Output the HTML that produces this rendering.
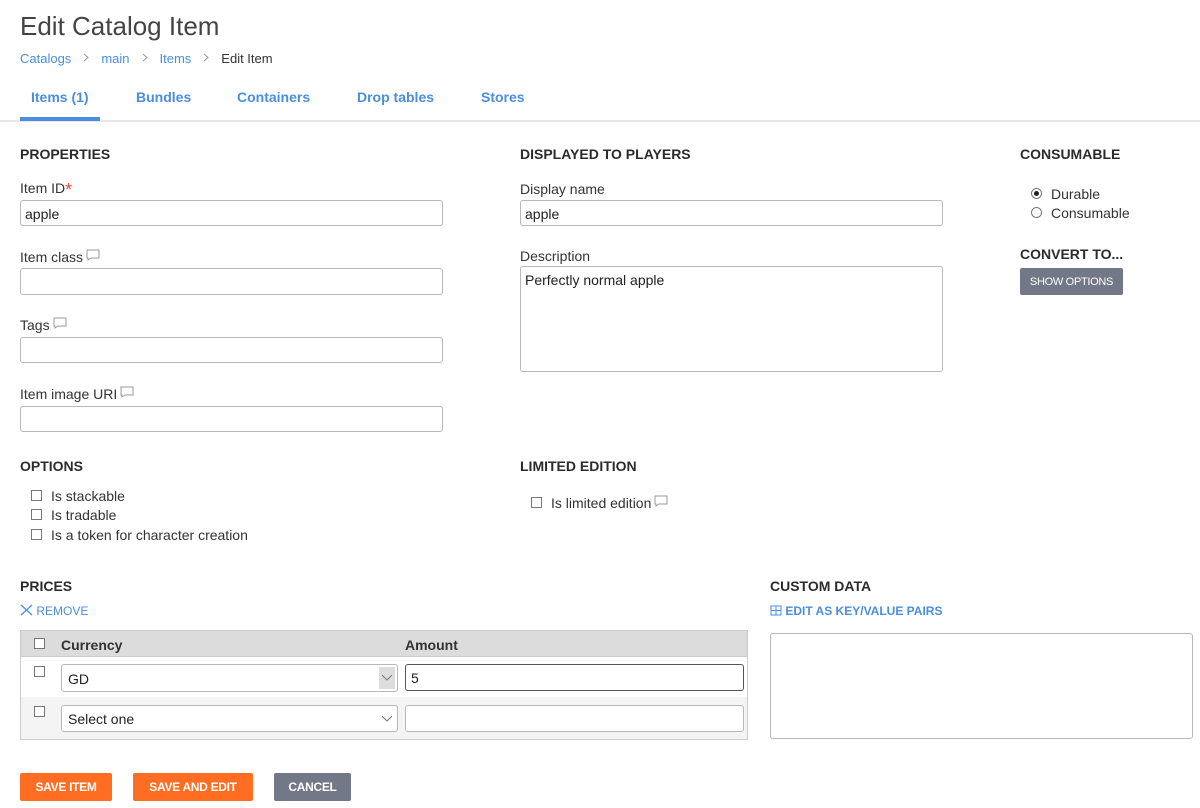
<!DOCTYPE html>
<html><head><meta charset="utf-8"><style>
*{box-sizing:border-box;margin:0;padding:0}
body{width:1200px;height:808px;background:#fff;font-family:"Liberation Sans",sans-serif;color:#333;position:relative;overflow:hidden;font-size:14px}
.a{position:absolute;white-space:nowrap}
.h{font-weight:bold;font-size:14px;color:#2b2b2b}
.lbl{font-size:14px;color:#333}
.in{position:absolute;border:1px solid #b8b8b8;border-radius:3px;background:#fff;font-size:14px;padding:5px 4px 3px;color:#222}
.cb{position:absolute;width:11px;height:11px;border:1px solid #777;background:#fff}
.blue{color:#4a8ee0}
.btn{position:absolute;color:#fff;font-size:12px;font-weight:bold;text-align:center;line-height:29px;border-radius:2px;letter-spacing:-0.3px}
svg.c{vertical-align:1px;margin-left:3px}
.sep{display:inline-block;margin:0 12px;vertical-align:1px}
</style></head><body>
<div class="a" style="left:20px;top:11px;font-size:26px;color:#444">Edit Catalog Item</div>
<div class="a" style="left:20px;top:51px;font-size:13px"><span class="blue">Catalogs</span><svg class="sep" width="6" height="9"><path d="M1 1l4 3.5L1 8" fill="none" stroke="#999"/></svg><span class="blue">main</span><svg class="sep" width="6" height="9"><path d="M1 1l4 3.5L1 8" fill="none" stroke="#999"/></svg><span class="blue">Items</span><svg class="sep" width="6" height="9"><path d="M1 1l4 3.5L1 8" fill="none" stroke="#999"/></svg><span style="color:#333">Edit Item</span></div>
<div class="a blue" style="left:31px;top:89px;font-weight:bold;font-size:14px">Items (1)</div>
<div class="a blue" style="left:136px;top:89px;font-weight:bold">Bundles</div>
<div class="a blue" style="left:237px;top:89px;font-weight:bold">Containers</div>
<div class="a blue" style="left:357px;top:89px;font-weight:bold">Drop tables</div>
<div class="a blue" style="left:481px;top:89px;font-weight:bold">Stores</div>
<div class="a" style="left:0;top:120px;width:1200px;height:2px;background:#e6e6e6"></div>
<div class="a" style="left:20px;top:117px;width:80px;height:4px;background:#4a8ee0"></div>

<div class="a h" style="left:20px;top:146px">PROPERTIES</div>
<div class="a lbl" style="left:20px;top:180px">Item ID<span style="color:#e8473c;font-size:18px;vertical-align:-3px">*</span></div>
<div class="in" style="left:20px;top:200px;width:423px;height:26px">apple</div>
<div class="a lbl" style="left:20px;top:249px">Item class<svg class="c" width="14" height="12"><path d="M1 1h12v8H5l-3 2V9H1z" fill="none" stroke="#999"/></svg></div>
<div class="in" style="left:20px;top:268px;width:423px;height:27px"></div>
<div class="a lbl" style="left:20px;top:317px">Tags<svg class="c" width="14" height="12"><path d="M1 1h12v8H5l-3 2V9H1z" fill="none" stroke="#999"/></svg></div>
<div class="in" style="left:20px;top:337px;width:423px;height:26px"></div>
<div class="a lbl" style="left:20px;top:386px">Item image URI<svg class="c" width="14" height="12"><path d="M1 1h12v8H5l-3 2V9H1z" fill="none" stroke="#999"/></svg></div>
<div class="in" style="left:20px;top:406px;width:423px;height:26px"></div>

<div class="a h" style="left:520px;top:146px">DISPLAYED TO PLAYERS</div>
<div class="a lbl" style="left:520px;top:181px">Display name</div>
<div class="in" style="left:520px;top:200px;width:423px;height:26px">apple</div>
<div class="a lbl" style="left:520px;top:248px">Description</div>
<div class="in" style="left:520px;top:266px;width:423px;height:106px">Perfectly normal apple</div>

<div class="a h" style="left:1020px;top:146px">CONSUMABLE</div>
<div class="a" style="left:1031px;top:188px;width:11px;height:11px;border:1px solid #777;border-radius:50%"><div style="margin:2px;width:5px;height:5px;border-radius:50%;background:#222"></div></div>
<div class="a lbl" style="left:1051px;top:186px">Durable</div>
<div class="a" style="left:1031px;top:207px;width:11px;height:11px;border:1px solid #777;border-radius:50%"></div>
<div class="a lbl" style="left:1051px;top:205px">Consumable</div>
<div class="a h" style="left:1020px;top:246px">CONVERT TO...</div>
<div class="btn" style="left:1020px;top:268px;width:103px;height:27px;background:#737889;font-weight:normal;font-size:11px;line-height:28px">SHOW OPTIONS</div>

<div class="a h" style="left:20px;top:458px">OPTIONS</div>
<div class="cb" style="left:31px;top:490px"></div><div class="a lbl" style="left:51px;top:488px">Is stackable</div>
<div class="cb" style="left:31px;top:509px"></div><div class="a lbl" style="left:51px;top:507px">Is tradable</div>
<div class="cb" style="left:31px;top:529px"></div><div class="a lbl" style="left:51px;top:527px">Is a token for character creation</div>

<div class="a h" style="left:520px;top:458px">LIMITED EDITION</div>
<div class="cb" style="left:531px;top:497px"></div><div class="a lbl" style="left:551px;top:495px">Is limited edition<svg class="c" width="14" height="12"><path d="M1 1h12v8H5l-3 2V9H1z" fill="none" stroke="#999"/></svg></div>

<div class="a h" style="left:20px;top:578px">PRICES</div>
<div class="a blue" style="left:20px;top:604px;font-size:12px"><svg width="13" height="12" style="vertical-align:-1px"><path d="M1 1l11 10M12 1L1 11" stroke="#4a8ee0" stroke-width="1.3"/></svg> REMOVE</div>
<div class="a" style="left:20px;top:630px;width:728px;height:110px;border:1px solid #ccc;background:#f4f4f4"></div>
<div class="a" style="left:21px;top:631px;width:726px;height:26px;background:#dcdcdc;border-bottom:1px solid #ccc"></div>
<div class="a" style="left:21px;top:657px;width:726px;height:40px;background:#fff"></div>
<div class="cb" style="left:34px;top:638px"></div>
<div class="a lbl" style="left:61px;top:637px;font-weight:bold;color:#333">Currency</div>
<div class="a lbl" style="left:405px;top:637px;font-weight:bold;color:#333">Amount</div>
<div class="cb" style="left:34px;top:666px"></div>
<div class="in" style="left:61px;top:664px;width:337px;height:28px;padding:6px">GD<div style="position:absolute;right:2px;top:2px;width:16px;height:22px;background:#ddd"></div><svg style="position:absolute;right:5px;top:10px" width="10" height="6"><path d="M0 0l5 5 5-5" fill="none" stroke="#777"/></svg></div>
<div class="in" style="left:405px;top:664px;width:339px;height:27px;border-color:#555;padding:5px 5px">5</div>
<div class="cb" style="left:34px;top:706px"></div>
<div class="in" style="left:61px;top:705px;width:337px;height:27px;padding:5px 6px">Select one<svg style="position:absolute;right:5px;top:10px" width="10" height="6"><path d="M0 0l5 5 5-5" fill="none" stroke="#777"/></svg></div>
<div class="in" style="left:405px;top:705px;width:339px;height:27px"></div>

<div class="a h" style="left:770px;top:578px">CUSTOM DATA</div>
<div class="a blue" style="left:770px;top:604px;font-size:12px;font-weight:bold"><svg width="12" height="11" style="vertical-align:-1px"><path d="M1 1h10v9H1zM6 1v9M1 5.5h10" fill="none" stroke="#4a8ee0"/></svg> EDIT AS KEY/VALUE PAIRS</div>
<div class="in" style="left:770px;top:633px;width:423px;height:106px"></div>

<div class="btn" style="left:20px;top:773px;width:92px;height:28px;background:#ff6d22">SAVE ITEM</div>
<div class="btn" style="left:133px;top:773px;width:120px;height:28px;background:#ff6d22">SAVE AND EDIT</div>
<div class="btn" style="left:274px;top:773px;width:77px;height:28px;background:#737889">CANCEL</div>
</body></html>
